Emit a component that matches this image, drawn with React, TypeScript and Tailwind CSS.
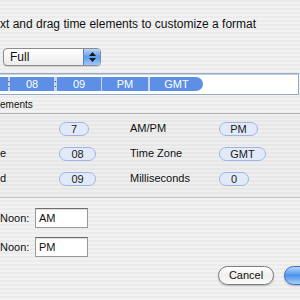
import React from "react";

const pinstripe =
  "bg-[repeating-linear-gradient(180deg,#ebebeb_0px,#ebebeb_2px,#f2f2f2_2px,#f2f2f2_4px)]";

function PopUp() {
  return (
    <div className="ml-[3px] flex h-[18px] w-[98px] overflow-hidden rounded-[4px] border border-[#8c8c8c] bg-gradient-to-b from-white to-[#ececec] shadow-[0_1px_1px_rgba(0,0,0,0.15)]">
      <div className="flex-1 pl-[6px] text-[12px] leading-[16px]">Full</div>
      <div className="flex w-[17px] flex-col items-center justify-center gap-[2px] border-l border-[#5d7fb8] bg-gradient-to-b from-[#b8d6fa] via-[#5c9cec] to-[#9ccaf9]">
        <svg width="7" height="4" viewBox="0 0 7 4">
          <path d="M3.5 0 L7 4 L0 4 Z" fill="#1b1b1b" />
        </svg>
        <svg width="7" height="4" viewBox="0 0 7 4">
          <path d="M0 0 L7 0 L3.5 4 Z" fill="#1b1b1b" />
        </svg>
      </div>
    </div>
  );
}

function Token({ label, w, round }: { label: string; w: number; round?: boolean }) {
  return (
    <div
      className={`flex h-[14px] shrink-0 items-center justify-center bg-[#5d8fe6] text-[11px] leading-[14px] text-white ${
        round ? "rounded-r-full" : ""
      }`}
      style={{ width: w }}
    >
      {label}
    </div>
  );
}

function Sep({ colon, w }: { colon?: boolean; w: number }) {
  return (
    <div
      className="flex h-[14px] shrink-0 items-center justify-center bg-[#c9d9f5] text-[10px] leading-[14px] text-[#222]"
      style={{ width: w }}
    >
      {colon ? ":" : ""}
    </div>
  );
}

function TokenField() {
  return (
    <div className="mt-[7px] h-[22px] w-[299px] border-y border-r border-[#98a9c4] bg-white shadow-[inset_0_1px_0_#c3cfe2]">
      <div className="flex pt-[3px]">
        <Token label="" w={8} />
        <Sep colon w={2} />
        <Token label="08" w={44} />
        <Sep colon w={3} />
        <Token label="09" w={44} />
        <Sep w={1} />
        <Token label="PM" w={46} />
        <Sep w={2} />
        <Token label="GMT" w={53} round />
      </div>
    </div>
  );
}

function Pill({ label, w }: { label: string; w: number }) {
  return (
    <div
      className="flex h-[14px] items-center justify-center rounded-full border border-[#9fb6e2] bg-[#e2eaf9] text-[11px] leading-[12px] text-[#1a1a1a]"
      style={{ width: w }}
    >
      {label}
    </div>
  );
}

function Row({
  left,
  leftPill,
  leftW,
  right,
  rightPill,
  rightW,
}: {
  left: string;
  leftPill: string;
  leftW: number;
  right: string;
  rightPill: string;
  rightW: number;
}) {
  return (
    <div className="flex h-[25px] items-center text-[11px]">
      <div className="w-[59px]">{left}</div>
      <div className="w-[71px]">
        <Pill label={leftPill} w={leftW} />
      </div>
      <div className="w-[89px]">{right}</div>
      <Pill label={rightPill} w={rightW} />
    </div>
  );
}

function ElementsBox() {
  return (
    <div className="mt-[1px]">
      <div className="h-[17px] text-[10px] leading-[17px]">ements</div>
      <div className="h-[85px] w-[310px] border-y border-t-[#b3b3b3] border-b-[#c4c4c4] bg-black/[0.015] pt-[2px]">
        <Row left="" leftPill="7" leftW={30} right="AM/PM" rightPill="PM" rightW={39} />
        <Row left="e" leftPill="08" leftW={37} right="Time Zone" rightPill="GMT" rightW={47} />
        <Row left="d" leftPill="09" leftW={37} right="Milliseconds" rightPill="0" rightW={30} />
      </div>
    </div>
  );
}

function NoonField({ label, value }: { label: string; value: string }) {
  return (
    <div className="flex h-[20px] items-center text-[11px]">
      <div className="w-[35px] pr-[7px] text-right">{label}</div>
      <div className="h-[20px] w-[53px] border border-[#9a9a9a] border-t-[#6f6f6f] bg-white pl-[3px] leading-[18px] shadow-[inset_0_1px_1px_rgba(0,0,0,0.15)]">
        {value}
      </div>
    </div>
  );
}

export default function App() {
  return (
    <div
      className={`h-[300px] w-[300px] overflow-hidden ${pinstripe} font-['Liberation_Sans',Arial,sans-serif] text-[12px] text-[#111]`}
    >
      <div className="h-[48px] pt-[17px] leading-[14px]">
        xt and drag time elements to customize a format
      </div>
      <PopUp />
      <TokenField />
      <ElementsBox />
      <div className="mt-[10px] flex flex-col gap-[9px]">
        <NoonField label="Noon:" value="AM" />
        <NoonField label="Noon:" value="PM" />
      </div>
      <div className="mt-[9px] flex justify-end gap-[10px]">
        <div className="flex h-[19px] w-[56px] items-center justify-center rounded-full border border-[#7d7d7d] bg-gradient-to-b from-white via-[#efefef] to-[#fcfcfc] text-[11px] leading-[17px] shadow-[0_1px_2px_rgba(0,0,0,0.25)]">
          Cancel
        </div>
        <div className="-mr-[40px] h-[19px] w-[56px] rounded-full border border-[#3b6fc6] bg-gradient-to-b from-[#b5d6fb] via-[#4d92ea] to-[#a7d3fb] shadow-[0_1px_2px_rgba(0,0,0,0.25)]" />
      </div>
    </div>
  );
}
